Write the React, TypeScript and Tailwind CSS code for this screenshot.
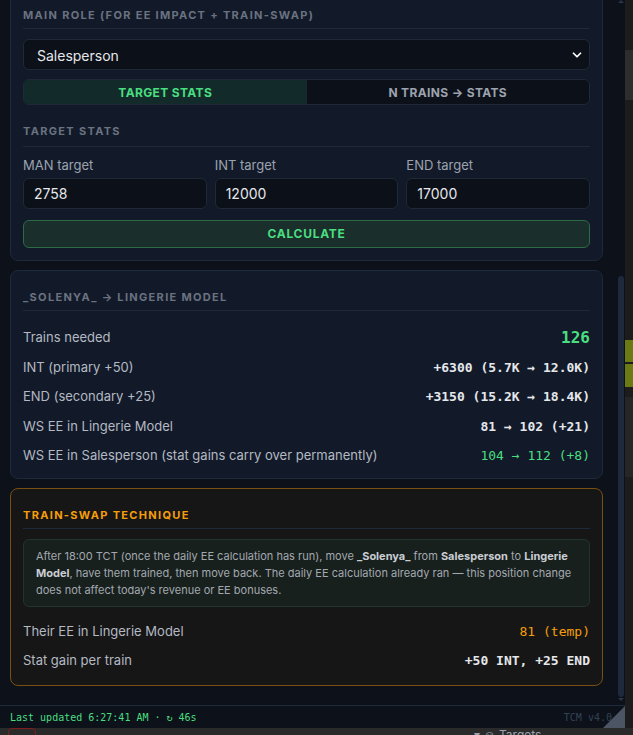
import { ChevronDown } from 'lucide-react'

const sans = 'font-["Inter","Liberation_Sans",sans-serif]'
const mono = 'font-["DejaVu_Sans_Mono","Liberation_Mono",monospace]'

type Row = {
  label: string
  value: string
  tone?: 'white' | 'green' | 'amber' | 'big'
}

const resultRows: Row[] = [
  { label: 'Trains needed', value: '126', tone: 'big' },
  { label: 'INT (primary +50)', value: '+6300 (5.7K → 12.0K)' },
  { label: 'END (secondary +25)', value: '+3150 (15.2K → 18.4K)' },
  { label: 'WS EE in Lingerie Model', value: '81 → 102 (+21)' },
  {
    label: 'WS EE in Salesperson (stat gains carry over permanently)',
    value: '104 → 112 (+8)',
    tone: 'green',
  },
]

const swapRows: Row[] = [
  { label: 'Their EE in Lingerie Model', value: '81 (temp)', tone: 'amber' },
  { label: 'Stat gain per train', value: '+50 INT, +25 END' },
]

const SectionTitle = ({
  children,
  amber,
}: {
  children: React.ReactNode
  amber?: boolean
}) => (
  <div
    className={`border-b border-[#1e293b] pb-[5px] text-[11px] leading-[16px] font-bold tracking-[0.12em] uppercase ${
      amber ? 'text-[#f59e0b]' : 'text-[#6b7280]'
    }`}
  >
    {children}
  </div>
)

const StatRow = ({ row }: { row: Row }) => {
  let valueClass = 'text-[13px] font-bold text-[#e5e7eb]'
  if (row.tone === 'big') valueClass = 'text-[16px] font-bold text-[#4ade80]'
  if (row.tone === 'green') valueClass = 'text-[13px] text-[#4ade80]'
  if (row.tone === 'amber') valueClass = 'text-[13px] text-[#f59e0b]'
  return (
    <div className="flex h-[20px] items-center justify-between">
      <span className="text-[13px] text-[#b4b9c2]">{row.label}</span>
      <span className={`${mono} ${valueClass}`}>{row.value}</span>
    </div>
  )
}

const TargetInput = ({ label, value }: { label: string; value: string }) => (
  <div className="flex flex-col">
    <label className="text-[13px] leading-[16px] text-[#9ca3af]">{label}</label>
    <div className="mt-[5px] flex h-[31px] items-center rounded-md border border-[#1f2937] bg-[#0c1018] px-[10px] text-[14px] text-[#e5e7eb]">
      {value}
    </div>
  </div>
)

export default function App() {
  return (
    <div className={`${sans} relative h-[735px] w-[633px] overflow-hidden bg-[#262626]`}>
      <div className="flex h-[728px]">
        {/* overlay panel */}
        <div className="flex w-[625px] flex-col bg-[#0d111a]">
          <div className="flex min-h-0 flex-1">
            <div className="min-w-0 flex-1 overflow-hidden pl-[10px] pr-[14px]">
              <div className="mt-[-12px] flex flex-col gap-[9px]">
                {/* role + target stats card */}
                <div className="rounded-lg border border-[#1e293b] bg-[#121a29] px-3 pt-[18px] pb-[12px]">
                  <SectionTitle>Main role (for EE impact + train-swap)</SectionTitle>
                  <div className="mt-[10px] flex h-[31px] items-center justify-between rounded-md border border-[#1f2937] bg-[#0c1018] pt-[1px] pr-[5px] pl-[13px] text-[14px] text-[#e5e7eb]">
                    <span>Salesperson</span>
                    <ChevronDown size={14} strokeWidth={3} className="text-white" />
                  </div>
                  <div className="mt-[9px] grid h-[26px] grid-cols-2 overflow-hidden rounded-md border border-[#1f2937] text-[12px] font-bold tracking-[0.03em]">
                    <div className="flex items-center justify-center bg-[#132a2a] pt-[1px] text-[#4ade80]">
                      TARGET STATS
                    </div>
                    <div className="flex items-center justify-center bg-[#0c1018] pt-[1px] text-[#9ca3af]">
                      N TRAINS → STATS
                    </div>
                  </div>
                  <div className="mt-[18px] border-b border-[#1e293b] pb-[7px] text-[11px] leading-[16px] font-bold tracking-[0.12em] text-[#6b7280]">
                    TARGET STATS
                  </div>
                  <div className="mt-[10px] grid grid-cols-3 gap-2">
                    <TargetInput label="MAN target" value="2758" />
                    <TargetInput label="INT target" value="12000" />
                    <TargetInput label="END target" value="17000" />
                  </div>
                  <div className="mt-[11px] flex h-[28px] items-center justify-center rounded-md border border-[#2d6a47] bg-[#1a2e2c] text-[12px] font-bold tracking-[0.06em] text-[#4ade80]">
                    CALCULATE
                  </div>
                </div>

                {/* result card */}
                <div className="rounded-lg border border-[#1e293b] bg-[#121a29] px-3 pt-[18px] pb-[12px]">
                  <SectionTitle>_Solenya_ → Lingerie Model</SectionTitle>
                  <div className="mt-[17px] flex flex-col gap-[9.5px]">
                    {resultRows.map((r) => (
                      <StatRow key={r.label} row={r} />
                    ))}
                  </div>
                </div>

                {/* train-swap card */}
                <div className="rounded-lg border border-[#7a4f12] bg-[#161616] px-3 pt-[18px] pb-[14px]">
                  <SectionTitle amber>Train-swap technique</SectionTitle>
                  <div className="mt-[10px] rounded-md border border-[#22352a] bg-[#18201d] px-3 py-[7.5px] text-[11px] leading-[17px] text-[#a3a8b0]">
                    After 18:00 TCT (once the daily EE calculation has run), move{' '}
                    <b className="text-[#c9cdd3]">_Solenya_</b> from{' '}
                    <b className="text-[#c9cdd3]">Salesperson</b> to{' '}
                    <b className="text-[#c9cdd3]">Lingerie Model</b>, have them trained, then
                    move back. The daily EE calculation already ran — this position change
                    does not affect today's revenue or EE bonuses.
                  </div>
                  <div className="mt-[15px] flex flex-col gap-[9px]">
                    {swapRows.map((r) => (
                      <StatRow key={r.label} row={r} />
                    ))}
                  </div>
                </div>
              </div>
            </div>
            {/* scrollbar */}
            <div className="flex w-[8px] flex-col items-center">
              <div className="h-0 w-0 border-x-[3px] border-b-[3px] border-x-transparent border-b-[#2b3647]" />
              <div className="mt-[273px] h-[421px] w-[6px] rounded-full bg-[#1e2a3b]" />
              <div className="mt-[1px] h-0 w-0 border-x-[3px] border-t-[3px] border-x-transparent border-t-[#2b3647]" />
            </div>
          </div>
          {/* footer */}
          <div className="relative flex h-[23px] items-center justify-between border-t border-[#1e293b] px-[10px] pr-[13px]">
            <span className={`${mono} text-[10px] text-[#4ade80]`}>
              Last updated 6:27:41 AM · ↻ 46s
            </span>
            <span className={`${mono} text-[10px] text-[#334155]`}>TCM v4.0</span>
            <svg
              width="22"
              height="22"
              viewBox="0 0 22 22"
              className="absolute right-0 bottom-0"
            >
              <polygon points="22,0 22,22 0,22" fill="#4b5563" />
            </svg>
          </div>
        </div>

        {/* page behind, right edge */}
        <div className="flex w-[8px] flex-col bg-[#1c1c1c]">
          <div className="mt-[50px] h-[50px] bg-[#2d2d2d]" />
          <div className="mt-[240px] h-[22px] bg-[#6b7a12]" />
          <div className="mt-[2px] h-[23px] bg-[#6b7a12]" />
          <div className="mt-[10px] h-[80px] bg-[#262626]" />
        </div>
      </div>
      {/* page behind, bottom edge */}
      <div className="flex h-[7px] items-start overflow-hidden bg-[#2a2a2a] text-[12px] leading-[14px] text-[#9ca3af]">
        <div className="ml-[8px] h-[14px] w-[28px] rounded border border-[#7f1d1d]" />
        <span className="ml-[438px]">▾ ☺ Targets</span>
      </div>
    </div>
  )
}
